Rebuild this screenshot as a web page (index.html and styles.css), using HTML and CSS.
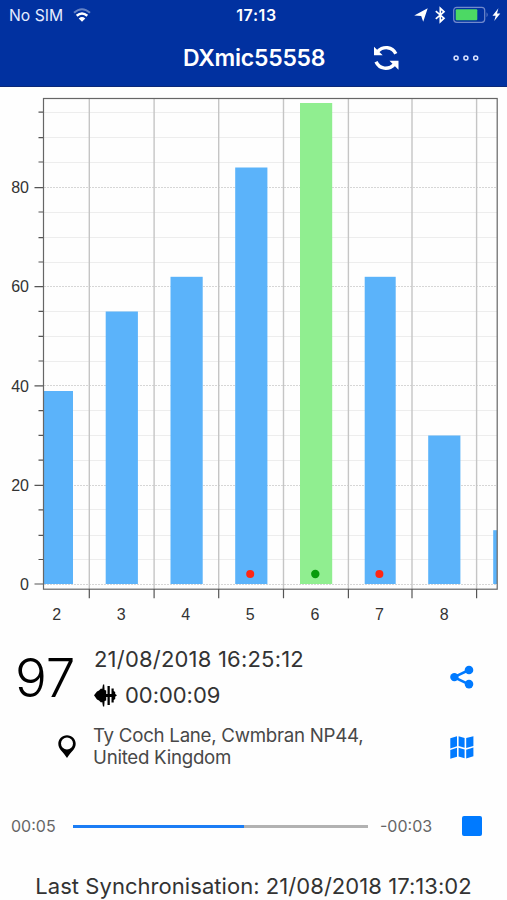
FILE: index.html
```html
<!DOCTYPE html>
<html lang="en">
<head>
<meta charset="utf-8">
<title>DXmic55558</title>
<link rel="stylesheet" href="styles.css">
</head>
<body>
<div class="app">
  <header class="header">
    <div class="status">
      <div class="status-left">
        <span>No SIM</span>
        <svg class="wifi" width="18" height="14" viewBox="0 0 18 14" fill="none" stroke="#fff" stroke-width="2">
          <path d="M1 4.7Q9-2.3 17 4.7" stroke-opacity=".4"/>
          <path d="M3.7 7.8Q9 3.2 14.3 7.8" stroke-width="2.5"/>
          <path d="M5.7 10.4Q9 7.5 12.3 10.4L9 13.7z" fill="#fff" stroke="none"/>
        </svg>
      </div>
      <span class="clock">17:13</span>
      <svg class="status-icons" width="88" height="18" viewBox="414 6 88 18">
        <path d="M414.2 15.4L427.7 8.3L423.2 21.7L421.2 15.9z" fill="#fff"/>
        <path d="M435.8 11.2L444 18.2L440.3 21.7V8.3L444 11.8L435.8 18.8" fill="none" stroke="#fff" stroke-width="1.7"/>
        <rect x="453.7" y="7.3" width="31" height="15" rx="3" fill="none" stroke="#7189cc" stroke-width="1.2"/>
        <rect x="455.7" y="9.3" width="21.6" height="11" rx="1" fill="#4cd964"/>
        <path d="M486.6 12.3Q488.6 14.8 486.6 17.3z" fill="#7189cc"/>
        <path d="M498.4 8.3L492.5 15.8H495.7L494.2 21L500.3 13.5H497z" fill="#fff"/>
      </svg>
    </div>
    <div class="nav">
      <h1 class="title">DXmic55558</h1>
      <svg class="refresh" width="26" height="26" viewBox="373 44 26 26">
        <path d="M377.5 50.6C383.5 44.5 392.5 45.6 395.8 52.8M376 60.8C379.5 68.4 388.5 69.3 394.5 63.2" fill="none" stroke="#fff" stroke-width="3.4"/>
        <path d="M374 45.7V54.2H382.7zM398.5 59.8H389.5L398.5 68.8z" fill="#fff"/>
      </svg>
      <svg class="more" width="26" height="8" viewBox="0 0 26 8" fill="none" stroke="#d9e3ff" stroke-width="1.5">
        <circle cx="3.1" cy="4" r="2"/><circle cx="12.9" cy="4" r="2"/><circle cx="22.7" cy="4" r="2"/>
      </svg>
    </div>
  </header>

  <svg class="chart" width="507" height="543" viewBox="0 87 507 543">
    <path class="grid-minor" d="M44 112.5H497M44 137.5H497M44 162.5H497M44 212.5H497M44 237.5H497M44 262.5H497M44 311.5H497M44 336.5H497M44 361.5H497M44 410.5H497M44 435.5H497M44 460.5H497M44 509.5H497M44 535.5H497M44 559.5H497"/>
    <path class="grid-major" d="M44 187.5H497M44 286.5H497M44 385.5H497M44 485.5H497M44 584.5H497"/>
    <path class="grid-vert" d="M89.3 99V589M154.1 99V589M218.7 99V589M283.5 99V589M348.4 99V589M412 99V589M476.6 99V589"/>
    <g class="bars">
      <rect x="44" y="391" width="29" height="193"/>
      <rect x="105.7" y="311.5" width="32.2" height="272.5"/>
      <rect x="170.5" y="276.8" width="32.2" height="307.2"/>
      <rect x="235.2" y="167.5" width="32.2" height="416.5"/>
      <rect class="selected" x="300" y="103" width="32.2" height="481"/>
      <rect x="364.7" y="276.8" width="31" height="307.2"/>
      <rect x="428.2" y="435.5" width="32.2" height="148.5"/>
      <rect x="493.2" y="530.2" width="3.8" height="53.8"/>
    </g>
    <g>
      <circle class="dot-alert" cx="250.2" cy="574" r="4"/>
      <circle class="dot-ok" cx="315.3" cy="574" r="4.2"/>
      <circle class="dot-alert" cx="379.4" cy="574" r="4"/>
    </g>
    <rect class="frame" x="43.5" y="98.5" width="453.7" height="490.7"/>
    <path class="ticks" d="M34.5 187.6H43M34.5 286.6H43M34.5 385.8H43M34.5 485.4H43M34.5 584H43M38.5 112.2H43M38.5 137.6H43M38.5 162H43M38.5 212H43M38.5 237.6H43M38.5 262H43M38.5 311.3H43M38.5 336.4H43M38.5 361H43M38.5 410.6H43M38.5 435.4H43M38.5 460.2H43M38.5 509.8H43M38.5 535.3H43M38.5 559.5H43M89.3 589V598.3M154.1 589V598.3M218.7 589V598.3M283.5 589V598.3M348.4 589V598.3M412 589V598.3M476.6 589V598.3"/>
    <g class="y-labels">
      <text x="29" y="193.3">80</text><text x="29" y="292.3">60</text><text x="29" y="391.5">40</text><text x="29" y="491">20</text><text x="29" y="590.3">0</text>
    </g>
    <g class="x-labels">
      <text x="56.7" y="619.6">2</text><text x="121.2" y="619.6">3</text><text x="185.8" y="619.6">4</text><text x="250.3" y="619.6">5</text><text x="315" y="619.6">6</text><text x="379.5" y="619.6">7</text><text x="444.2" y="619.6">8</text>
    </g>
  </svg>

  <section class="reading">
    <div class="level">97</div>
    <div class="details">
      <div class="date">21/08/2018 16:25:12</div>
      <div class="duration">
        <svg width="23" height="23" viewBox="94 684 23 23">
          <path d="M94 695.3L97 691.5L99 690.5L101 688.5L102.2 689L103 684.5L104.2 684.5L104.6 690L106.2 690.5V694H107.5V686H109.8V694H111.5V688.5H113.7V691L115.2 692V694L117 695.3L115.2 696.8V699L113.7 700V702.5H111.5V697H109.8V705H107.5V697H106.2V700.5L104.6 701L104.2 706.5H103L102.2 702L101 702.5L99 700.5L97 699.5z"/>
        </svg>
        <span>00:00:09</span>
      </div>
    </div>
    <svg class="share" width="24" height="24" viewBox="450 665 24 24" fill="#007aff">
      <path d="M469 670L454 677.2L469 684.3" fill="none" stroke="#007aff" stroke-width="2.5"/>
      <circle cx="454.4" cy="677.1" r="4.2"/><circle cx="469" cy="670" r="4.3"/><circle cx="469" cy="684.1" r="4.3"/>
    </svg>
  </section>

  <section class="place">
    <svg class="pin" width="18" height="24" viewBox="58 735 18 24">
      <path fill-rule="evenodd" d="M67 735.2C62 735.2 58.3 739 58.3 743.7C58.3 749.3 63.5 752 67 758C70.5 752 75.7 749.3 75.7 743.7C75.7 739 72 735.2 67 735.2zM67 737.6A6 6 0 1 1 67 749.6A6 6 0 1 1 67 737.6z"/>
    </svg>
    <p class="address">Ty Coch Lane, Cwmbran NP44,<br>United Kingdom</p>
    <svg class="map" width="24" height="24" viewBox="450 736 24 24" fill="#007aff">
      <path d="M450.3 738.2L457 736.2V746.2L450.3 748.5zM458.6 736.2L464.6 738V747.8L458.6 746zM466.2 738L473.4 736.2V746L466.2 748zM450.3 750.1L457 747.8V756.7L450.3 758.7zM458.6 747.7L464.6 749.6V758.3L458.6 756.4zM466.2 749.7L473.4 747.6V756.2L466.2 758.6z"/>
    </svg>
  </section>

  <section class="player">
    <span class="elapsed">00:05</span>
    <div class="track"><div class="progress"></div></div>
    <span class="remaining">-00:03</span>
    <div class="stop"></div>
  </section>

  <footer class="sync">Last Synchronisation: 21/08/2018 17:13:02</footer>
</div>
</body>
</html>
```
FILE: styles.css
```css
* { box-sizing: border-box; }
body { margin: 0; background: #fefefe; font-family: Inter, "Liberation Sans", sans-serif; color: #333; }
.app { width: 507px; height: 900px; display: flex; flex-direction: column; overflow: hidden; white-space: nowrap; }
.header { height: 87px; flex: none; background: #0131a0; color: #fff; border-bottom: 1px solid #0b2878; }
.status { height: 30px; display: grid; grid-template-columns: 1fr auto 1fr; align-items: center; padding: 0 5px 0 9px; font-size: 15.7px; }
.status-left { display: flex; align-items: center; gap: 10px; color: #e5ebff; }
.clock { font-weight: 600; font-size: 16px; letter-spacing: .6px; position: relative; left: 1px; }
.status-icons { justify-self: end; }
.nav { height: 56px; display: flex; align-items: center; padding-left: 183px; }
.title { margin: 0; width: 190px; font-size: 23px; font-weight: 600; line-height: 28px; letter-spacing: -.25px; }
.more { margin-left: 54px; }
.chart { flex: none; display: block; }
.grid-minor { stroke: #ededed; }
.grid-major { stroke: #d6d6d6; stroke-dasharray: 2 1; }
.grid-vert { stroke: #c5c5c5; stroke-width: 1.4; }
.bars { fill: #5bb3fa; }
.bars .selected { fill: #90ee90; }
.dot-alert { fill: #ff2614; }
.dot-ok { fill: #079b0b; }
.frame { fill: none; stroke: #666; stroke-width: 1.2; }
.ticks { fill: none; stroke: #555; stroke-width: 1.2; }
.y-labels, .x-labels { font: 16px "Liberation Sans", sans-serif; fill: #333; }
.y-labels { text-anchor: end; }
.x-labels { text-anchor: middle; }
.reading { height: 94px; flex: none; display: flex; align-items: flex-start; padding: 12px 33px 0 15px; }
.level { width: 79px; margin-top: 4px; font-size: 53px; font-weight: 300; line-height: 64px; color: #000; }
.details { flex: 1; }
.date, .duration { font-size: 22px; line-height: 35px; letter-spacing: .2px; }
.duration { display: flex; align-items: center; gap: 8px; letter-spacing: -.05px; padding-top: 1px; }
.share { margin-top: 23px; }
.place { height: 64px; flex: none; display: flex; align-items: flex-start; padding: 0 33px 0 58px; }
.pin { margin-top: 11px; }
.address { flex: 1; margin: 1px 0 0 17px; font-size: 18.7px; line-height: 22px; letter-spacing: -.27px; color: #484848; }
.map { margin-top: 12px; }
.player { height: 76px; flex: none; display: flex; align-items: center; padding: 0 25px 0 11px; font-size: 16px; color: #666; }
.elapsed { width: 62px; }
.track { width: 295px; height: 3px; background: #b2b2b2; }
.progress { width: 58%; height: 100%; background: #1b7df5; }
.remaining { width: 82px; margin-left: 12px; }
.stop { width: 20px; height: 20px; border-radius: 2px; background: #007aff; }
.sync { height: 44px; text-align: center; font-size: 22px; line-height: 45px; letter-spacing: .05px; }
```
